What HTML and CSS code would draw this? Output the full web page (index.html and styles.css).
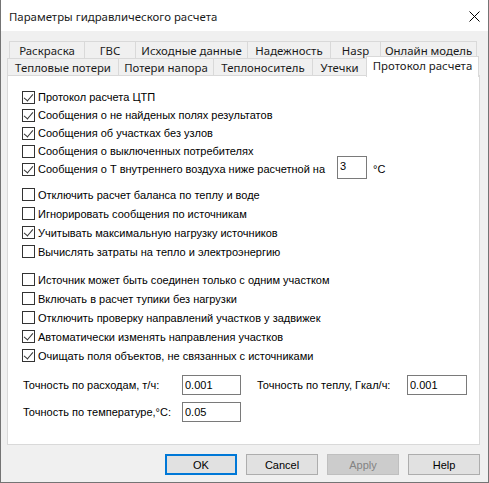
FILE: index.html
```html
<!DOCTYPE html>
<html lang="ru">
<head>
<meta charset="utf-8">
<title>Параметры гидравлического расчета</title>
<link rel="stylesheet" href="styles.css">
</head>
<body>
<div class="dialog">
  <div class="titlebar">
    <span class="title">Параметры гидравлического расчета</span>
    <span class="close"><svg width="11" height="11" viewBox="0 0 11 11"><path d="M0.5 0.5 L10.5 10.5 M10.5 0.5 L0.5 10.5" stroke="#000" stroke-width="1" fill="none"/></svg></span>
  </div>

  <div class="tabs">
    <div class="tab-row back">
      <div class="tab">Раскраска</div>
      <div class="tab">ГВС</div>
      <div class="tab">Исходные данные</div>
      <div class="tab">Надежность</div>
      <div class="tab">Hasp</div>
      <div class="tab last">Онлайн модель</div>
    </div>
    <div class="tab-row front">
      <div class="tab">Тепловые потери</div>
      <div class="tab">Потери напора</div>
      <div class="tab">Теплоноситель</div>
      <div class="tab">Утечки</div>
      <div class="tab active">Протокол расчета</div>
    </div>
  </div>

  <div class="panel">
    <div class="group g1">
      <label class="check"><span class="box on"></span>Протокол расчета ЦТП</label>
      <label class="check"><span class="box on"></span>Сообщения о не найденых полях результатов</label>
      <label class="check"><span class="box on"></span>Сообщения об участках без узлов</label>
      <label class="check"><span class="box"></span>Сообщения о выключенных потребителях</label>
      <label class="check"><span class="box on"></span><span class="wide">Сообщения о Т внутреннего воздуха ниже расчетной на</span><input class="field small" type="text" value="3"><span class="unit">°C</span></label>
    </div>
    <div class="group g2">
      <label class="check"><span class="box"></span>Отключить расчет баланса по теплу и воде</label>
      <label class="check"><span class="box"></span>Игнорировать сообщения по источникам</label>
      <label class="check"><span class="box on"></span>Учитывать максимальную нагрузку источников</label>
      <label class="check"><span class="box"></span>Вычислять затраты на тепло и электроэнергию</label>
    </div>
    <div class="group g3">
      <label class="check"><span class="box"></span>Источник может быть соединен только с одним участком</label>
      <label class="check"><span class="box"></span>Включать в расчет тупики без нагрузки</label>
      <label class="check"><span class="box"></span>Отключить проверку направлений участков у задвижек</label>
      <label class="check"><span class="box on"></span>Автоматически изменять направления участков</label>
      <label class="check"><span class="box on"></span>Очищать поля объектов, не связанных с источниками</label>
    </div>
    <div class="precision">
      <span class="plabel">Точность по расходам, т/ч:</span>
      <input class="field" type="text" value="0.001">
      <span class="plabel second">Точность по теплу, Гкал/ч:</span>
      <input class="field" type="text" value="0.001">
      <span class="plabel">Точность по температуре,°С:</span>
      <input class="field" type="text" value="0.05">
    </div>
  </div>

  <div class="buttons">
    <button class="btn default">OK</button>
    <button class="btn">Cancel</button>
    <button class="btn" disabled>Apply</button>
    <button class="btn">Help</button>
  </div>
</div>
</body>
</html>
```

FILE: styles.css
```css
* {
  box-sizing: border-box;
}

html, body {
  margin: 0;
  padding: 0;
  background: #f0f0f0;
}

body {
  font-family: "Liberation Sans", Arial, sans-serif;
  font-size: 11px;
  color: #000;
}

.dialog {
  width: 489px;
  height: 483px;
  border: 1px solid #747474;
  border-top: none;
  background: #f0f0f0;
  display: flex;
  flex-direction: column;
}

/* title bar */
.titlebar {
  height: 31px;
  background: #fff;
  display: flex;
  align-items: center;
  justify-content: space-between;
  padding: 1px 8px 0 8px;
}

.title {
  font-family: "Noto Sans", sans-serif;
  font-size: 11.4px;
  color: #1a1a1a;
}

.close {
  display: flex;
  width: 11px;
  height: 11px;
}

/* tab strip, two rows */
.tabs {
  margin-top: 10px;
  font-family: "Noto Sans", sans-serif;
  font-size: 11.4px;
  color: #1a1a1a;
}

.tab-row {
  display: grid;
  height: 17px;
}

.tab-row.back {
  margin-left: 8px;
  grid-template-columns: 75px 51px 112px 83px 50px 97px;
}

.tab-row.front {
  margin-left: 6px;
  grid-template-columns: 111px 95px 99px 54px 113px;
}

.tab {
  height: 17px;
  border-top: 1px solid #d9d9d9;
  border-left: 1px solid #d9d9d9;
  background: #f0f0f0;
  display: flex;
  align-items: center;
  justify-content: center;
  white-space: nowrap;
  line-height: 1;
  padding-top: 1px;
}

.tab.last {
  border-right: 1px solid #d9d9d9;
}

.tab.active {
  position: relative;
  z-index: 1;
  height: 21px;
  margin-top: -2px;
  background: #fff;
  border-right: 1px solid #d9d9d9;
  padding-top: 0;
  padding-bottom: 2px;
}

/* page content */
.panel {
  height: 370px;
  margin: 0 8px 0 6px;
  background: #fff;
  border: 1px solid #d9d9d9;
  padding: 12px 14px 0 14px;
}

.group {
  display: flex;
  flex-direction: column;
}

.g1 .check {
  height: 18px;
}

.g2 {
  margin-top: 7px;
}

.g3 {
  margin-top: 9px;
}

.g2 .check,
.g3 .check {
  height: 19px;
}

.check {
  display: flex;
  align-items: center;
  white-space: nowrap;
}

.box {
  width: 13px;
  height: 13px;
  border: 1px solid #333;
  background: #fff;
  margin-right: 3px;
  flex: none;
  position: relative;
}

.box.on::after {
  content: "";
  position: absolute;
  left: 3px;
  top: 0px;
  width: 4px;
  height: 8px;
  border-right: 1px solid #333;
  border-bottom: 1px solid #333;
  transform: rotate(40deg);
  transform-origin: center;
}

.wide {
  width: 299px;
}

.field {
  font-family: "Liberation Sans", Arial, sans-serif;
  font-size: 11px;
  color: #000;
  border: 1px solid #7a7a7a;
  background: #fff;
  padding: 0 2px;
  margin: 0;
  height: 20px;
  width: 59px;
  outline: none;
}

.field.small {
  width: 30px;
  height: 23px;
  padding: 0 2px 4px 2px;
  align-self: flex-start;
  margin-top: -4px;
}

.unit {
  margin-left: 6px;
}

.precision {
  margin-top: 10px;
  margin-left: 1px;
  display: grid;
  grid-template-columns: 159px 59px 166px 60px;
  grid-auto-rows: 20px;
  row-gap: 7px;
  align-items: center;
}

.precision .field {
  width: 100%;
}

.plabel.second {
  padding-left: 16px;
}

/* dialog buttons */
.buttons {
  display: flex;
  justify-content: flex-end;
  gap: 9px;
  margin: 9px 8px 0 0;
}

.btn {
  width: 72px;
  height: 21px;
  font-family: "Liberation Sans", Arial, sans-serif;
  font-size: 11px;
  color: #000;
  background: #e1e1e1;
  border: 1px solid #adadad;
  padding: 0;
  margin: 0;
}

.btn.default {
  border: 2px solid #0078d7;
}

.btn:disabled {
  background: #cccccc;
  border-color: #bfbfbf;
  color: #838383;
}
```
